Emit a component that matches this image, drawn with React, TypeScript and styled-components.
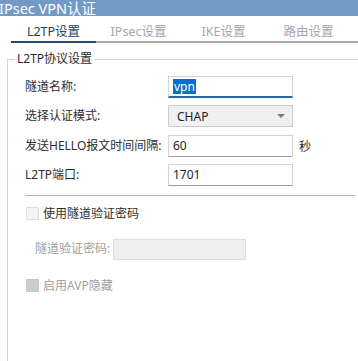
import React from 'react';
import styled, { createGlobalStyle } from 'styled-components';

const GlobalStyle = createGlobalStyle`
  html, body {
    margin: 0;
    padding: 0;
    background: #ffffff;
    overflow: hidden;
  }
  body {
    font-family: "Noto Sans", "Noto Sans CJK SC", sans-serif;
    font-size: 12px;
    color: #333333;
  }
`;

const Page = styled.div`
  width: 358px;
  height: 361px;
  overflow: hidden;
  background: #ffffff;
`;

const TitleBar = styled.div`
  height: 16px;
  background: #7399c5;
  display: flex;
  align-items: flex-end;
  overflow: hidden;
`;

const TitleText = styled.span`
  color: #ffffff;
  font-size: 14.5px;
  line-height: 15px;
  white-space: nowrap;
  margin-left: -1px;
`;

const TabBar = styled.div`
  padding: 6px 0 0 11px;
`;

const TabStrip = styled.div`
  display: flex;
  border-bottom: 2px solid #a9a9a9;
`;

const Tab = styled.div<{ active?: boolean }>`
  width: 85px;
  height: 19px;
  line-height: 19px;
  text-align: center;
  font-size: 12.5px;
  color: ${({ active }) => (active ? '#213f60' : '#a4a4b4')};
  border-bottom: 2px solid ${({ active }) => (active ? '#2b4a6a' : 'transparent')};
  margin-bottom: -2px;
`;

const Group = styled.fieldset`
  margin: 8px -20px 0 7px;
  padding: 9px 0 0 17px;
  border: 1px solid #d6d6d6;
  height: 320px;
  min-width: 0;
`;

const Legend = styled.legend`
  margin-left: -10px;
  padding: 0 2px;
  line-height: 16px;
  font-size: 12px;
  color: #2a2a2a;
`;

const FormGrid = styled.div`
  display: grid;
  grid-template-columns: 143px 125px auto;
  grid-auto-rows: 22px;
  row-gap: 7.33px;
  align-items: center;
`;

const Label = styled.div<{ muted?: boolean }>`
  line-height: 16px;
  color: ${({ muted }) => (muted ? '#a0a0a0' : '#2e2e2e')};
  white-space: nowrap;
`;

const TextBox = styled.div<{ focused?: boolean }>`
  box-sizing: border-box;
  height: 22px;
  border: 1px solid #d4d4d4;
  border-bottom: ${({ focused }) => (focused ? '2px solid #2768a2' : '1px solid #9c9c9c')};
  padding: 0 0 0 4px;
  display: flex;
  align-items: center;
  font-size: 12px;
  color: #1e1e1e;
  background: #ffffff;
`;

const Selected = styled.span`
  background: #0a6fd3;
  color: #ffffff;
  line-height: 15px;
  padding: 0 1px;
`;

const SelectBox = styled.div`
  box-sizing: border-box;
  height: 22px;
  border: 1px solid #cccccc;
  background: #f0f0f0;
  padding: 0 7px 0 8px;
  display: flex;
  align-items: center;
  justify-content: space-between;
  color: #1e1e1e;
`;

const Caret = styled.span`
  width: 0;
  height: 0;
  border-left: 4px solid transparent;
  border-right: 4px solid transparent;
  border-top: 4px solid #7a7a7a;
`;

const Unit = styled.span`
  padding-left: 6px;
  color: #2e2e2e;
`;

const Divider = styled.div`
  width: 330px;
  height: 1px;
  background: #b4b4b4;
  margin-top: 9px;
`;

const CheckRow = styled.label<{ mt: number }>`
  display: flex;
  align-items: center;
  gap: 4px;
  margin-top: ${({ mt }) => mt}px;
  line-height: 16px;
`;

const Box = styled.span<{ filled?: boolean }>`
  box-sizing: border-box;
  width: 13px;
  height: 13px;
  margin-left: 1px;
  border: 1px solid ${({ filled }) => (filled ? '#c6c6c6' : '#dcdcdc')};
  background: ${({ filled }) => (filled ? '#cbcbcb' : '#f4f4f4')};
`;

const CheckText = styled.span<{ muted?: boolean }>`
  color: ${({ muted }) => (muted ? '#a0a0a0' : '#2e2e2e')};
`;

const SubRow = styled.div`
  display: flex;
  align-items: center;
  padding-left: 10px;
  margin-top: 17px;
`;

const DisabledBox = styled.div`
  box-sizing: border-box;
  width: 133px;
  height: 21px;
  margin-left: 3px;
  border: 1px solid #dedede;
  background: #eeeeee;
`;

const App: React.FC = () => {
  return (
    <Page>
      <GlobalStyle />
      <TitleBar>
        <TitleText>IPsec VPN认证</TitleText>
      </TitleBar>
      <TabBar>
        <TabStrip>
          <Tab active>L2TP设置</Tab>
          <Tab>IPsec设置</Tab>
          <Tab>IKE设置</Tab>
          <Tab>路由设置</Tab>
        </TabStrip>
      </TabBar>
      <Group>
        <Legend>L2TP协议设置</Legend>
        <FormGrid>
          <Label>隧道名称:</Label>
          <TextBox focused>
            <Selected>vpn</Selected>
          </TextBox>
          <span />
          <Label>选择认证模式:</Label>
          <SelectBox>
            <span>CHAP</span>
            <Caret />
          </SelectBox>
          <span />
          <Label>发送HELLO报文时间间隔:</Label>
          <TextBox>60</TextBox>
          <Unit>秒</Unit>
          <Label>L2TP端口:</Label>
          <TextBox>1701</TextBox>
          <span />
        </FormGrid>
        <Divider />
        <CheckRow mt={10}>
          <Box />
          <CheckText>使用隧道验证密码</CheckText>
        </CheckRow>
        <SubRow>
          <Label muted>隧道验证密码:</Label>
          <DisabledBox />
        </SubRow>
        <CheckRow mt={18}>
          <Box filled />
          <CheckText muted>启用AVP隐藏</CheckText>
        </CheckRow>
      </Group>
    </Page>
  );
};

export default App;
